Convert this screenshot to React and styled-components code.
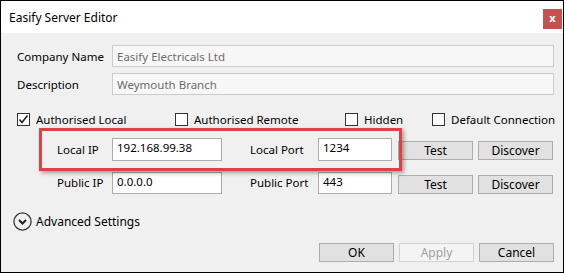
import React from 'react';
import styled, { createGlobalStyle } from 'styled-components';

const GlobalStyle = createGlobalStyle`
  html, body {
    margin: 0;
    padding: 0;
    background: #ffffff;
  }
  * {
    box-sizing: border-box;
  }
`;

const Window = styled.div`
  position: relative;
  width: 564px;
  height: 273px;
  border: 1px solid #000;
  display: flex;
  flex-direction: column;
  font-family: "Noto Sans", "Open Sans", sans-serif;
  font-size: 11.5px;
  color: #000;
`;

const TitleBar = styled.div`
  height: 32px;
  background: #fff;
  display: flex;
  align-items: center;
  justify-content: space-between;
  padding: 0 1px 0 8px;
`;

const Title = styled.div`
  font-size: 12px;
`;

const CloseButton = styled.div`
  width: 19px;
  height: 20px;
  margin-top: 3px;
  background: #c75050;
  color: #fff;
  font-weight: bold;
  font-size: 11px;
  display: flex;
  align-items: center;
  justify-content: center;
  padding-bottom: 2px;
`;

const Body = styled.div`
  flex: 1;
  background: #f0f0f0;
  padding: 12px 9px 0 16px;
  display: flex;
  flex-direction: column;
`;

const FieldRow = styled.div`
  display: flex;
  align-items: center;
  height: 22px;
  margin-bottom: 6px;
`;

const FieldLabel = styled.div`
  width: 95px;
`;

const Input = styled.div`
  height: ${(p) => p.h || 22}px;
  width: ${(p) => (p.w ? `${p.w}px` : 'auto')};
  flex: ${(p) => (p.w ? 'none' : 1)};
  border: 1px solid ${(p) => (p.disabled ? '#cccccc' : '#abadb3')};
  background: ${(p) => (p.disabled ? '#f7f7f7' : '#ffffff')};
  color: ${(p) => (p.disabled ? '#6d6d6d' : '#000')};
  padding: ${(p) => (p.disabled ? '3px 4px' : '1px 4px')};
  line-height: 15px;
  white-space: nowrap;
  overflow: hidden;
`;

const CheckRow = styled.div`
  display: grid;
  grid-template-columns: 158px 170px 87px 1fr;
  align-items: center;
  height: 18px;
  margin-top: 9px;
`;

const CheckItem = styled.label`
  display: flex;
  align-items: center;
  gap: 6px;
  white-space: nowrap;
`;

const Box = styled.span`
  width: 13px;
  height: 13px;
  border: 1px solid #333;
  background: #fff;
  display: flex;
  align-items: center;
  justify-content: center;
`;

const IpRow = styled.div`
  display: flex;
  align-items: center;
  height: 23px;
  margin-top: ${(p) => p.mt}px;
  padding-left: 40px;
`;

const IpLabel = styled.div`
  width: ${(p) => p.w}px;
  margin-left: ${(p) => p.ml || 0}px;
`;

const Button = styled.div`
  width: 75px;
  height: 19px;
  margin-left: ${(p) => p.ml || 0}px;
  margin-top: ${(p) => p.mt || 0}px;
  background: ${(p) => (p.disabled ? '#f4f4f4' : '#e1e1e1')};
  border: 1px solid ${(p) => (p.disabled ? '#d2d2d2' : '#adadad')};
  color: ${(p) => (p.disabled ? '#a0a0a0' : '#000')};
  display: flex;
  align-items: center;
  justify-content: center;
  font-size: 12px;
`;

const Advanced = styled.div`
  display: flex;
  align-items: center;
  gap: 4px;
  height: 18px;
  margin-top: 18px;
  margin-left: -4px;
  font-size: 12px;
`;

const Footer = styled.div`
  display: flex;
  justify-content: flex-end;
  gap: 5px;
  margin-top: 13px;
`;

const Highlight = styled.div`
  position: absolute;
  left: 38px;
  top: 127px;
  width: 363px;
  height: 43px;
  border: 3px solid #e0403f;
  box-shadow: 2px 2px 4px rgba(0, 0, 0, 0.35);
  pointer-events: none;
`;

const Check = ({ checked, label }) => (
  <CheckItem>
    <Box>
      {checked && (
        <svg width="11" height="11" viewBox="0 0 11 11">
          <path d="M1.5 5.5 L4 8.5 L9.5 1.5" fill="none" stroke="#222" strokeWidth="1.6" />
        </svg>
      )}
    </Box>
    {label}
  </CheckItem>
);

const ChevronCircle = () => (
  <svg width="19" height="19" viewBox="0 0 19 19">
    <circle cx="9.5" cy="9.5" r="8.6" fill="none" stroke="#333" strokeWidth="1.3" />
    <path d="M6 8 L9.5 11.5 L13 8" fill="none" stroke="#222" strokeWidth="2" />
  </svg>
);

const App = () => (
  <>
    <GlobalStyle />
    <Window>
      <TitleBar>
        <Title>Easify Server Editor</Title>
        <CloseButton>x</CloseButton>
      </TitleBar>
      <Body>
        <FieldRow>
          <FieldLabel>Company Name</FieldLabel>
          <Input disabled>Easify Electricals Ltd</Input>
        </FieldRow>
        <FieldRow>
          <FieldLabel>Description</FieldLabel>
          <Input disabled>Weymouth Branch</Input>
        </FieldRow>
        <CheckRow>
          <Check checked label="Authorised Local" />
          <Check label="Authorised Remote" />
          <Check label="Hidden" />
          <Check label="Default Connection" />
        </CheckRow>
        <IpRow mt={10}>
          <IpLabel w={55}>Local IP</IpLabel>
          <Input w={110} h={23}>192.168.99.38</Input>
          <IpLabel w={68} ml={28}>Local Port</IpLabel>
          <Input w={74} h={23}>1234</Input>
          <Button ml={6} mt={1}>Test</Button>
          <Button ml={5} mt={1}>Discover</Button>
        </IpRow>
        <IpRow mt={10}>
          <IpLabel w={55}>Public IP</IpLabel>
          <Input w={110} h={22}>0.0.0.0</Input>
          <IpLabel w={68} ml={28}>Public Port</IpLabel>
          <Input w={74} h={22}>443</Input>
          <Button ml={6} mt={3}>Test</Button>
          <Button ml={5} mt={3}>Discover</Button>
        </IpRow>
        <Advanced>
          <ChevronCircle />
          Advanced Settings
        </Advanced>
        <Footer>
          <Button>OK</Button>
          <Button disabled>Apply</Button>
          <Button>Cancel</Button>
        </Footer>
      </Body>
      <Highlight />
    </Window>
  </>
);

export default App;
